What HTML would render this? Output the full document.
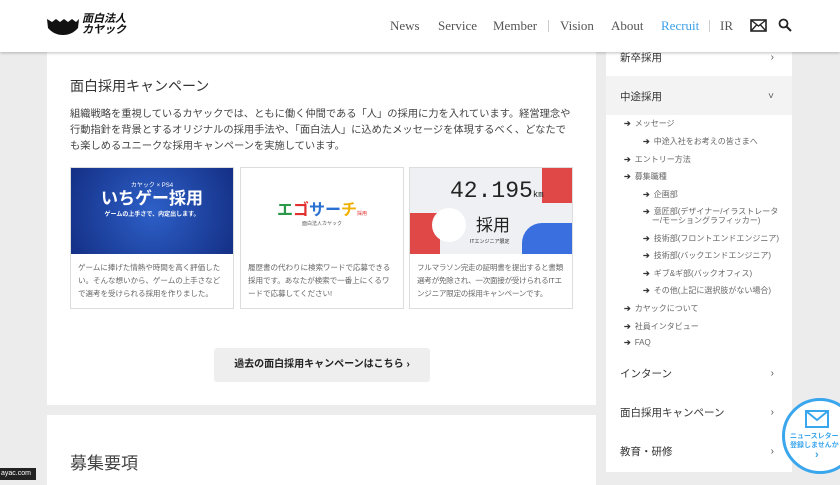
<!DOCTYPE html>
<html><head><meta charset="utf-8"><style>
*{margin:0;padding:0;box-sizing:border-box}
body{width:840px;height:480px;overflow:hidden;background:#ececec;font-family:"Liberation Sans","Noto Sans CJK JP",sans-serif;color:#333;position:relative}
.hdr{position:absolute;left:0;top:0;width:840px;height:52px;background:#fff;box-shadow:0 1px 3px rgba(0,0,0,.25);z-index:5}
.nav{position:absolute;top:18px;font-family:"Liberation Serif",serif;font-size:13px;color:#555}
.card{position:absolute;left:47px;width:549px;background:#fff}
.side{position:absolute;left:606px;top:52px;width:186px;height:420px;background:#fff}
.si{position:absolute;left:14px;font-size:10.5px;color:#333}
.chev{position:absolute;right:18px;font-size:10px;color:#555;margin-top:2px}
.sub{position:absolute;font-size:8px;color:#666;white-space:nowrap}
.sub b{color:#333;margin-right:4px}
.c{position:absolute;top:167px;width:164px;height:142px;border:1px solid #ddd;background:#fff;overflow:hidden}
.c .im{height:86px}
.c p{font-size:7.6px;color:#666;line-height:13px;padding:7px 7px;letter-spacing:-0.1px}
</style></head><body>
<div class="hdr">
 <svg style="position:absolute;left:46px;top:16px" width="34" height="20" viewBox="0 0 34 20"><path d="M1 3 L6 6 L10 3 L14 6 L18 3 L22 6 L26 3 L30 6 L33 3 L32 12 Q26 19 17 19 Q8 19 2 12 Z" fill="#111"/></svg>
 <div style="position:absolute;left:82px;top:14px;font-size:11px;font-weight:bold;line-height:11px;color:#111;font-style:italic">面白法人<br>カヤック</div>
 <span class="nav" style="left:390px">News</span>
 <span class="nav" style="left:438px">Service</span>
 <span class="nav" style="left:493px">Member</span>
 <span style="position:absolute;left:548px;top:20px;width:1px;height:12px;background:#ccc"></span>
 <span class="nav" style="left:560px">Vision</span>
 <span class="nav" style="left:611px">About</span>
 <span class="nav" style="left:661px;color:#3ba0e8">Recruit</span>
 <span style="position:absolute;left:709px;top:20px;width:1px;height:12px;background:#ccc"></span>
 <span class="nav" style="left:720px">IR</span>
 <svg style="position:absolute;left:750px;top:19px" width="17" height="13" viewBox="0 0 17 13"><rect x="1" y="1" width="15" height="11" fill="none" stroke="#222" stroke-width="1.6"/><path d="M1 1 L8.5 7 L16 1 M1 12 L6.5 6 M16 12 L10.5 6" fill="none" stroke="#222" stroke-width="1.3"/></svg>
 <svg style="position:absolute;left:778px;top:18px" width="14" height="14" viewBox="0 0 14 14"><circle cx="5.5" cy="5.5" r="4" fill="none" stroke="#222" stroke-width="1.8"/><path d="M8.5 8.5 L13 13" stroke="#222" stroke-width="2"/></svg>
</div>

<div class="card" style="top:52px;height:353px">
 <div style="position:absolute;left:23px;top:24px;font-size:14px;color:#333">面白採用キャンペーン</div>
 <div style="position:absolute;left:23px;top:55px;width:506px;font-size:10.3px;line-height:16px;color:#444;letter-spacing:-0.05px">組織戦略を重視しているカヤックでは、ともに働く仲間である「人」の採用に力を入れています。経営理念や行動指針を背景とするオリジナルの採用手法や、「面白法人」に込めたメッセージを体現するべく、どなたでも楽しめるユニークな採用キャンペーンを実施しています。</div>
</div>
<div class="c" style="left:70px"><div class="im" style="background:radial-gradient(circle at 50% 50%,#2d60c8,#142f85);position:relative;color:#fff;text-align:center"><div style="padding-top:12px;font-size:6px">カヤック × PS4</div><div style="font-size:17px;font-weight:bold;line-height:20px">いちゲー採用</div><div style="font-size:6px;font-weight:bold">ゲームの上手さで、内定出します。</div></div><p>ゲームに捧げた情熱や時間を高く評価したい。そんな想いから、ゲームの上手さなどで選考を受けられる採用を作りました。</p></div>
<div class="c" style="left:240px"><div class="im" style="text-align:center;padding-top:28px"><span style="font-size:16px;font-weight:bold;color:#2a9a4a">エ</span><span style="font-size:16px;font-weight:bold;color:#e03030">ゴ</span><span style="font-size:16px;font-weight:bold;color:#2a70d0">サー</span><span style="font-size:16px;font-weight:bold;color:#f0b000">チ</span><span style="font-size:5px;color:#e03030">採用</span><div style="font-size:5px;color:#555">面白法人カヤック</div></div><p>履歴書の代わりに検索ワードで応募できる採用です。あなたが検索で一番上にくるワードで応募してください!</p></div>
<div class="c" style="left:409px"><div class="im" style="position:relative;background:#eef0f3;overflow:hidden"><div style="position:absolute;left:0;top:45px;width:30px;height:41px;background:#e04848"></div><div style="position:absolute;right:0;top:0;width:30px;height:35px;background:#e04848"></div><div style="position:absolute;right:0;top:55px;width:50px;height:31px;background:#3a6fe0;border-radius:20px 0 0 0"></div><div style="position:absolute;left:22px;top:40px;width:34px;height:34px;border-radius:50%;background:#fff"></div><div style="position:absolute;left:40px;top:10px;font-size:23px;color:#222;font-family:'Liberation Mono',monospace">42.195<span style="font-size:9px">km</span></div><div style="position:absolute;left:66px;top:43px;font-size:17px;color:#222">採用</div><div style="position:absolute;left:60px;top:70px;font-size:5px;color:#222">ITエンジニア限定</div></div><p style="letter-spacing:-0.3px">フルマラソン完走の証明書を提出すると書類選考が免除され、一次面接が受けられるITエンジニア限定の採用キャンペーンです。</p></div>
<div style="position:absolute;left:214px;top:348px;width:216px;height:34px;background:#eee;border-radius:3px;font-size:10px;font-weight:bold;color:#222;text-align:center;line-height:34px">過去の面白採用キャンペーンはこちら ›</div>

<div class="card" style="top:415px;height:70px"><div style="position:absolute;left:23px;top:34px;font-size:17px;color:#444">募集要項</div></div>
<div style="position:absolute;left:0;top:468px;width:36px;height:12px;background:#222;color:#fff;font-size:7px;line-height:12px;padding-left:1px">ayac.com</div>

<div class="side">
 <div class="si" style="top:-2px">新卒採用</div><span class="chev" style="top:-2px">›</span>
 <div style="position:absolute;left:0;top:24px;width:186px;height:39px;background:#f3f3f3"></div>
 <div class="si" style="top:37px">中途採用</div><span class="chev" style="top:37px">˅</span>
 <div class="sub" style="left:18px;top:66px"><b>➔</b>メッセージ</div>
 <div class="sub" style="left:37px;top:84px"><b>➔</b>中途入社をお考えの皆さまへ</div>
 <div class="sub" style="left:18px;top:102px"><b>➔</b>エントリー方法</div>
 <div class="sub" style="left:18px;top:119px"><b>➔</b>募集職種</div>
 <div class="sub" style="left:37px;top:137px"><b>➔</b>企画部</div>
 <div class="sub" style="left:37px;top:155px;line-height:9px"><b>➔</b>意匠部(デザイナー/イラストレータ<br>&nbsp;&nbsp;&nbsp;&nbsp;ー/モーショングラフィッカー)</div>
 <div class="sub" style="left:37px;top:181px"><b>➔</b>技術部(フロントエンドエンジニア)</div>
 <div class="sub" style="left:37px;top:198px"><b>➔</b>技術部(バックエンドエンジニア)</div>
 <div class="sub" style="left:37px;top:216px"><b>➔</b>ギブ&amp;ギ部(バックオフィス)</div>
 <div class="sub" style="left:37px;top:233px"><b>➔</b>その他(上記に選択肢がない場合)</div>
 <div class="sub" style="left:18px;top:251px"><b>➔</b>カヤックについて</div>
 <div class="sub" style="left:18px;top:269px"><b>➔</b>社員インタビュー</div>
 <div class="sub" style="left:18px;top:286px"><b>➔</b>FAQ</div>
 <div class="si" style="top:314px">インターン</div><span class="chev" style="top:314px">›</span>
 <div class="si" style="top:353px">面白採用キャンペーン</div><span class="chev" style="top:353px">›</span>
 <div class="si" style="top:392px">教育・研修</div><span class="chev" style="top:392px">›</span>
</div>
<div style="position:absolute;left:782px;top:398px;width:76px;height:76px;border-radius:50%;border:3px solid #3aa6ee;background:#fff;overflow:hidden">
 <svg style="position:absolute;left:20px;top:9px" width="24" height="18" viewBox="0 0 24 18"><rect x="1" y="1" width="22" height="16" fill="none" stroke="#3aa6ee" stroke-width="2"/><path d="M1 1 L12 10 L23 1" fill="none" stroke="#3aa6ee" stroke-width="2"/></svg>
 <div style="position:absolute;left:5px;top:31px;font-size:7px;line-height:9px;color:#3aa6ee;font-weight:bold;white-space:nowrap">ニュースレター<br>登録しませんか</div>
 <div style="position:absolute;left:30px;top:48px;font-size:11px;color:#3aa6ee;font-weight:bold">›</div>
</div>
</body></html>
